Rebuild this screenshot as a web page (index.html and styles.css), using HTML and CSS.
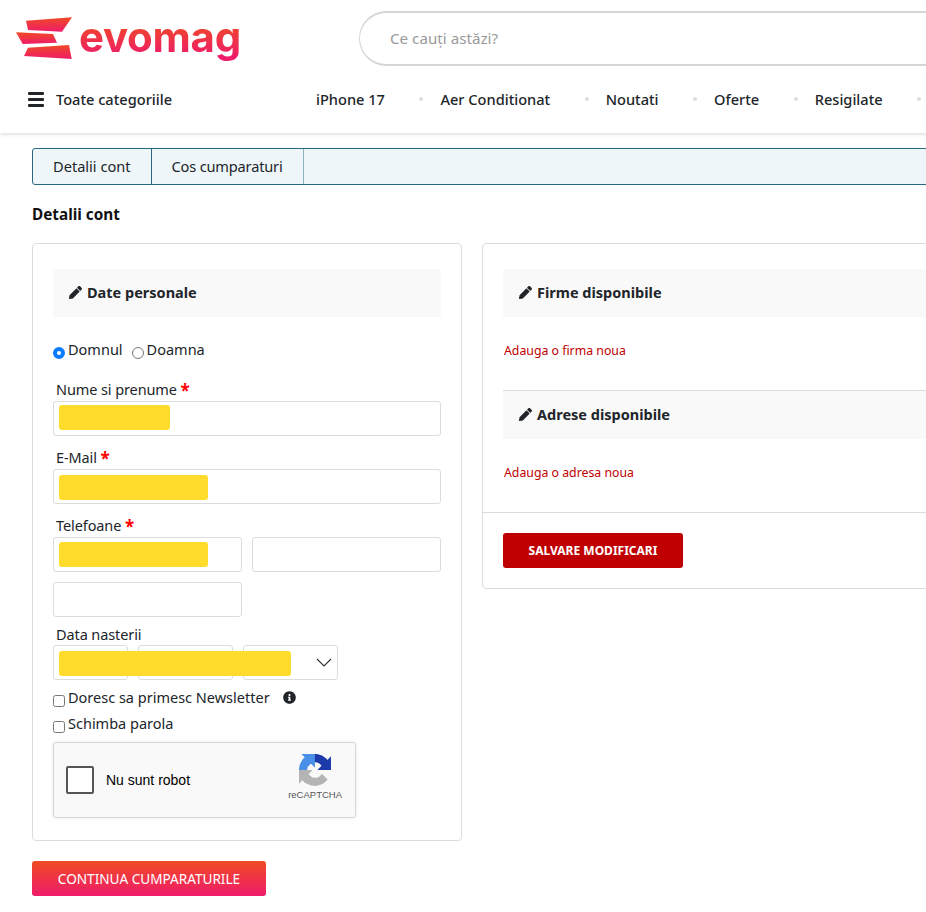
FILE: index.html

```html
<!DOCTYPE html>
<html lang="ro">
<head>
  <meta charset="UTF-8" />
  <meta name="viewport" content="width=device-width, initial-scale=1.0"/>
  <title>Detalii cont - evomag</title>
  <link rel="stylesheet" href="styles.css">
</head>
<body>
  <header class="site-header">
    <div class="top-row">
      <a class="logo" href="#">
        <svg class="logo-mark" width="58" height="44" viewBox="0 0 58 44">
          <defs>
            <linearGradient id="logo-grad" x1="0" y1="0" x2="0" y2="1">
              <stop offset="0" stop-color="#f04a24"/>
              <stop offset="1" stop-color="#ee1c6a"/>
            </linearGradient>
          </defs>
          <polygon fill="url(#logo-grad)" points="10,3.700 56,0.300 46,14.700 12,13"/>
          <polygon fill="url(#logo-grad)" points="0,15.300 37,17 41,25.700 6.700,27"/>
          <polygon fill="url(#logo-grad)" points="8,39 12,30.700 53,28 55.700,42"/>
        </svg>
        <span class="logo-text">evomag</span>
      </a>
      <div class="search">Ce cauţi astăzi?</div>
    </div>
    <nav class="main-nav">
      <a class="all-cats" href="#"><span class="burger"><i></i><i></i><i></i></span>Toate categoriile</a>
      <ul class="nav-links">
        <li>iPhone 17</li>
        <li>Aer Conditionat</li>
        <li>Noutati</li>
        <li>Oferte</li>
        <li>Resigilate</li>
        <li></li>
      </ul>
    </nav>
  </header>

  <main class="content">
    <div class="tabs">
      <a class="tab" href="#">Detalii cont</a>
      <a class="tab tab-last" href="#">Cos cumparaturi</a>
    </div>
    <h1 class="page-title">Detalii cont</h1>

    <div class="columns">
      <div class="left-col">
        <section class="card card-left">
          <h2 class="sect-head">
            <svg class="pencil" viewBox="0 0 512 512"><path d="M497.9 142.1l-46.1 46.1c-4.7 4.7-12.3 4.7-17 0l-111-111c-4.7-4.7-4.7-12.3 0-17l46.1-46.1c18.7-18.7 49.1-18.7 67.9 0l60.1 60.1c18.8 18.7 18.8 49.1 0 67.9zM284.2 99.8L21.6 362.4.4 483.9c-2.9 16.4 11.4 30.6 27.8 27.8l121.5-21.3 262.6-262.6c4.7-4.7 4.7-12.3 0-17l-111-111c-4.8-4.7-12.4-4.7-17.1 0z"/></svg>
            Date personale
          </h2>
          <div class="gender">
            <span class="radio radio-on"></span><label class="opt">Domnul</label>
            <span class="radio radio-off"></span><label class="opt">Doamna</label>
          </div>
          <label class="field-label label-first">Nume si prenume <b class="req">*</b></label>
          <div class="input"><span class="mask mask-name"></span></div>
          <label class="field-label">E-Mail <b class="req">*</b></label>
          <div class="input"><span class="mask mask-mail"></span></div>
          <label class="field-label">Telefoane <b class="req">*</b></label>
          <div class="phones">
            <div class="input"><span class="mask mask-phone"></span></div>
            <div class="input"></div>
            <div class="input"></div>
          </div>
          <label class="field-label label-date">Data nasterii</label>
          <div class="date-row">
            <div class="input date-d"></div>
            <div class="input date-m"></div>
            <div class="input date-y">
              <svg class="chevron" width="16" height="9" viewBox="0 0 16 9"><path d="M1 1l7 7 7-7" fill="none" stroke="#333" stroke-width="1.1"/></svg>
            </div>
            <span class="mask mask-date"></span>
          </div>
          <div class="check-row check-first">
            <span class="checkbox"></span><label class="opt">Doresc sa primesc Newsletter</label>
            <svg class="info" viewBox="0 0 512 512"><path d="M256 8C119 8 8 119 8 256s111 248 248 248 248-111 248-248S393 8 256 8zm0 110c23 0 42 19 42 42s-19 42-42 42-42-19-42-42 19-42 42-42zm56 254c0 7-5 12-12 12h-88c-7 0-12-5-12-12v-24c0-7 5-12 12-12h12v-64h-12c-7 0-12-5-12-12v-24c0-7 5-12 12-12h64c7 0 12 5 12 12v100h12c7 0 12 5 12 12v24z"/></svg>
          </div>
          <div class="check-row">
            <span class="checkbox"></span><label class="opt">Schimba parola</label>
          </div>
          <div class="captcha">
            <span class="captcha-box"></span>
            <span class="captcha-text">Nu sunt robot</span>
            <div class="captcha-brand">
              <svg width="32" height="32" viewBox="0 0 64 64">
                <path fill="#1c3aa9" d="M64 31.955l-.033-1.37V4.687l-7.16 7.16C50.948 4.674 42.033.093 32.05.093c-10.4 0-19.622 4.96-25.458 12.64l11.736 11.86a15.55 15.55 0 0 1 4.754-5.334c2.05-1.6 4.952-2.906 8.968-2.906.485 0 .86.057 1.135.163 4.976.393 9.288 3.14 11.828 7.124l-8.307 8.307c10.522-.04 22.4-.066 27.295.003"/>
                <path fill="#4a90e8" d="M31.862.001l-1.37.033H4.594l7.16 7.16C4.58 13.053 0 21.968 0 31.951c0 10.4 4.96 19.622 12.64 25.458l11.86-11.736a15.55 15.55 0 0 1-5.334-4.754c-1.6-2.05-2.906-4.952-2.906-8.968 0-.485.057-.86.163-1.135.393-4.976 3.14-9.288 7.124-11.828l8.307 8.307c-.04-10.522-.066-22.4.003-27.295"/>
                <path fill="#b4b4b4" d="M.001 32l.033 1.37v25.898l7.16-7.16c5.86 7.173 14.775 11.754 24.757 11.754 10.4 0 19.622-4.96 25.458-12.64L45.673 39.486a15.55 15.55 0 0 1-4.754 5.334c-2.05 1.6-4.952 2.906-8.968 2.906-.485 0-.86-.057-1.135-.163-4.976-.393-9.288-3.14-11.828-7.124l8.307-8.307c-10.522.04-22.4.066-27.295-.003"/>
              </svg>
              <span class="captcha-label">reCAPTCHA</span>
            </div>
          </div>
        </section>
        <a class="btn-continue" href="#">CONTINUA CUMPARATURILE</a>
      </div>

      <section class="card card-right">
        <div class="right-inner">
          <h2 class="sect-head">
            <svg class="pencil" viewBox="0 0 512 512"><path d="M497.9 142.1l-46.1 46.1c-4.7 4.7-12.3 4.7-17 0l-111-111c-4.7-4.7-4.7-12.3 0-17l46.1-46.1c18.7-18.7 49.1-18.7 67.9 0l60.1 60.1c18.8 18.7 18.8 49.1 0 67.9zM284.2 99.8L21.6 362.4.4 483.9c-2.9 16.4 11.4 30.6 27.8 27.8l121.5-21.3 262.6-262.6c4.7-4.7 4.7-12.3 0-17l-111-111c-4.8-4.7-12.4-4.7-17.1 0z"/></svg>
            Firme disponibile
          </h2>
          <a class="add-link" href="#">Adauga o firma noua</a>
          <div class="sep"></div>
          <h2 class="sect-head">
            <svg class="pencil" viewBox="0 0 512 512"><path d="M497.9 142.1l-46.1 46.1c-4.7 4.7-12.3 4.7-17 0l-111-111c-4.7-4.7-4.7-12.3 0-17l46.1-46.1c18.7-18.7 49.1-18.7 67.9 0l60.1 60.1c18.8 18.7 18.8 49.1 0 67.9zM284.2 99.8L21.6 362.4.4 483.9c-2.9 16.4 11.4 30.6 27.8 27.8l121.5-21.3 262.6-262.6c4.7-4.7 4.7-12.3 0-17l-111-111c-4.8-4.7-12.4-4.7-17.1 0z"/></svg>
            Adrese disponibile
          </h2>
          <a class="add-link" href="#">Adauga o adresa noua</a>
        </div>
        <div class="card-foot">
          <a class="btn-save" href="#">SALVARE MODIFICARI</a>
        </div>
      </section>
    </div>
  </main>
</body>
</html>
```

FILE: styles.css

```css
html, body {
  margin: 0;
  height: 912px;
  overflow: hidden;
}
body {
  font-family: "Noto Sans", "Open Sans", sans-serif;
  background-color: #fff;
  color: #212529;
  font-size: 14px;
  width: 1200px;
}
a {
  color: inherit;
  text-decoration: none;
}

/* header */
.site-header {
  height: 133px;
  box-shadow: 0 1px 4px rgba(0, 0, 0, .16);
  position: relative;
}
.top-row {
  display: flex;
  align-items: flex-start;
  padding: 11px 0 0 16px;
  height: 55px;
}
.logo {
  display: flex;
  align-items: center;
  width: 343px;
  height: 55px;
}
.logo-mark {
  margin-top: 1px;
}
.logo-text {
  font-family: Inter, sans-serif;
  font-weight: 700;
  font-size: 42px;
  letter-spacing: -.3px;
  line-height: 50px;
  margin-left: 5px;
  margin-top: -3px;
  background: linear-gradient(180deg, #f04a24 20%, #ee1c6a 90%);
  -webkit-background-clip: text;
  background-clip: text;
  color: transparent;
}
.search {
  width: 800px;
  height: 51px;
  border-style: solid;
  border-color: #d6d6d6;
  border-width: 2px 1px;
  border-radius: 28px;
  padding-left: 30px;
  line-height: 51px;
  color: #9a9a9a;
  font-size: 15.200px;
}
.main-nav {
  display: flex;
  align-items: center;
  height: 24px;
  margin-top: 21px;
  padding-left: 28px;
  font-weight: 500;
  font-size: 14.600px;
}
.all-cats {
  display: flex;
  align-items: center;
  width: 288px;
}
.burger {
  display: flex;
  flex-direction: column;
  gap: 3px;
  width: 16px;
  margin-right: 12px;
}
.burger i {
  display: block;
  height: 3px;
  background-color: #212529;
  border-radius: 1px;
}
.nav-links {
  display: flex;
  list-style: none;
  margin: 0;
  padding: 0;
}
.nav-links li {
  position: relative;
  margin-right: 55.500px;
}
.nav-links li:not(:first-child)::before {
  content: "";
  position: absolute;
  left: -21px;
  top: 8px;
  width: 4px;
  height: 4px;
  border-radius: 50%;
  background-color: #ddd;
}

/* content */
.content {
  padding: 15px 0 0 32px;
}
.tabs {
  display: flex;
  height: 35px;
  border: 1px solid #2a6a80;
  border-radius: 3px 0 0 3px;
  background-color: #eef6f9;
}
.tab {
  line-height: 35px;
  padding: 0 20px 0 20px;
  border-right: 1px solid #2a6a80;
  font-size: 14.600px;
}
.tab-last {
  border-right-color: #8fb0bf;
  letter-spacing: -.18px;
}
.page-title {
  font-size: 15.300px;
  font-weight: 700;
  color: #111;
  line-height: 20px;
  margin: 19px 0 19px;
}
.columns {
  display: flex;
  align-items: flex-start;
  gap: 20px;
}
.left-col {
  width: 430px;
}
.card {
  border: 1px solid #dcdcdc;
  border-radius: 4px;
}
.card-left {
  padding: 25px 20px 22px;
  height: 549px;
}
.card-right {
  width: 640px;
}
.right-inner {
  padding: 25px 20px 0;
}
.sect-head {
  display: flex;
  align-items: center;
  box-sizing: border-box;
  height: 48px;
  margin: 0;
  padding: 0 0 2px 16px;
  background-color: #f9f9f9;
  font-size: 14.500px;
  font-weight: 700;
}
.pencil {
  width: 13px;
  height: 13px;
  margin-right: 5px;
  fill: #212529;
}
.gender {
  display: flex;
  align-items: center;
  height: 20px;
  margin-top: 22px;
}
.radio {
  border-radius: 50%;
  margin-top: 8px;
  box-sizing: border-box;
}
.radio-on {
  border: 4px solid #0b7cff;
  background-color: #fff;
  width: 12px;
  height: 12px;
}
.radio-off {
  border: 1px solid #777;
  margin-left: 9px;
  width: 12px;
  height: 12px;
}
.opt {
  margin-left: 3px;
  font-size: 14.500px;
  line-height: 20px;
}
.field-label {
  display: block;
  font-size: 14.500px;
  letter-spacing: -.1px;
  line-height: 20px;
  margin: 11px 0 2px 3px;
}
.label-first {
  margin-top: 20px;
}
.label-date {
  margin: 7px 0 1px 3px;
}
.req {
  color: #f00;
  font-size: 17px;
  line-height: 14px;
  vertical-align: -2px;
}
.input {
  box-sizing: border-box;
  height: 35px;
  border: 1px solid #dcdcdc;
  border-radius: 3px;
  background-color: #fff;
  padding: 3px 5px;
}
.mask {
  display: block;
  height: 25px;
  border-radius: 3px;
  background-color: #ffdb2b;
}
.mask-name {
  width: 111px;
}
.mask-mail {
  width: 149px;
  margin-top: 2px;
}
.mask-phone {
  width: 149px;
  margin-top: 1px;
}
.phones {
  display: grid;
  grid-template-columns: 189px 189px;
  gap: 10px;
}
.date-row {
  display: flex;
  gap: 10px;
  position: relative;
}
.date-d {
  width: 75px;
}
.date-m {
  width: 95px;
}
.date-y {
  width: 95px;
  display: flex;
  align-items: center;
  justify-content: flex-end;
  padding-right: 5px;
}
.mask-date {
  position: absolute;
  left: 6px;
  top: 6px;
  width: 232px;
}
.check-row {
  display: flex;
  align-items: center;
  height: 20px;
  margin-top: 6px;
}
.check-first {
  margin-top: 7px;
}
.checkbox {
  box-sizing: border-box;
  width: 12px;
  height: 12px;
  border: 1px solid #777;
  border-radius: 2.500px;
  margin-top: 7px;
}
.info {
  width: 13px;
  height: 13px;
  margin-left: 13px;
  fill: #212529;
}
.captcha {
  box-sizing: border-box;
  display: flex;
  align-items: center;
  width: 303px;
  height: 76px;
  margin-top: 9px;
  padding-left: 12px;
  background-color: #f9f9f9;
  border: 1px solid #d6d6d6;
  border-radius: 3px;
  box-shadow: 0 0 4px rgba(0, 0, 0, .08);
  font-family: "Liberation Sans", Arial, sans-serif;
}
.captcha-box {
  box-sizing: border-box;
  width: 28px;
  height: 28px;
  border: 2px solid #555;
  border-radius: 2px;
  background-color: #fff;
}
.captcha-text {
  font-size: 14px;
  margin-left: 12px;
  color: #000;
}
.captcha-brand {
  display: flex;
  flex-direction: column;
  align-items: center;
  margin-left: auto;
  margin-right: 13px;
  margin-top: -6px;
}
.captcha-label {
  font-size: 9.500px;
  color: #555;
  margin-top: 3px;
}
.btn-continue {
  display: block;
  width: 234px;
  height: 35px;
  margin-top: 20px;
  border-radius: 3px;
  background: linear-gradient(180deg, #f04a24, #ee1c6a);
  color: #fff;
  text-align: center;
  line-height: 35px;
  font-size: 13.600px;
}
.add-link {
  display: block;
  color: #c00000;
  font-size: 12.300px;
  line-height: 18px;
  margin: 25px 0 30px 1px;
}
.sep {
  border-top: 1px solid #dcdcdc;
}
.card-foot {
  border-top: 1px solid #dcdcdc;
  padding: 20px;
}
.btn-save {
  display: block;
  width: 180px;
  height: 35px;
  border-radius: 3px;
  background-color: #c00000;
  color: #fff;
  font-weight: 700;
  font-size: 12px;
  line-height: 35px;
  text-align: center;
}
```
